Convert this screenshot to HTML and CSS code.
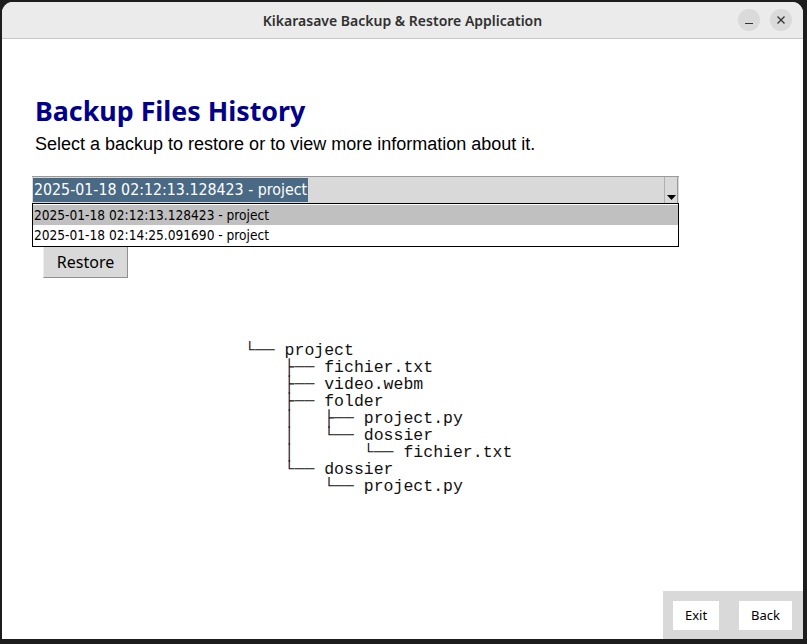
FILE: index.html
```html
<!DOCTYPE html>
<html>
<head>
<meta charset="utf-8">
<link rel="stylesheet" href="styles.css">
</head>
<body>
<div class="window">
  <div class="titlebar">
    <div class="title">Kikarasave Backup &amp; Restore Application</div>
    <div class="wbtns">
      <span class="wbtn"><svg width="22" height="22" viewBox="0 0 22 22"><line x1="7" y1="14.5" x2="15" y2="14.5" stroke="#333" stroke-width="1.2"/></svg></span>
      <span class="wbtn"><svg width="22" height="22" viewBox="0 0 22 22"><path d="M7.5 7.5 L14.5 14.5 M14.5 7.5 L7.5 14.5" stroke="#333" stroke-width="1.3"/></svg></span>
    </div>
  </div>
  <div class="content">
    <h1 class="heading">Backup Files History</h1>
    <p class="subtitle">Select a backup to restore or to view more information about it.</p>
    <div class="combo-wrap">
      <div class="combo">
        <div class="combo-field"><span class="combo-sel">2025-01-18 02:12:13.128423 - project</span></div>
        <div class="combo-arrow"><svg width="9" height="6" viewBox="0 0 9 6"><path d="M0 0 H9 L4.5 5 Z" fill="#000"/></svg></div>
      </div>
      <div class="dropdown">
        <div class="dd-item active">2025-01-18 02:12:13.128423 - project</div>
        <div class="dd-item">2025-01-18 02:14:25.091690 - project</div>
      </div>
    </div>
    <button class="restore">Restore</button>
    <pre class="tree">└── project
    ├── fichier.txt
    ├── video.webm
    ├── folder
    │   ├── project.py
    │   └── dossier
    │       └── fichier.txt
    └── dossier
        └── project.py</pre>
  </div>
  <div class="footer">
    <div class="panel">
      <button class="fbtn">Exit</button>
      <button class="fbtn">Back</button>
    </div>
  </div>
</div>
</body>
</html>
```
FILE: styles.css
```css
html, body {
  margin: 0;
  padding: 0;
  width: 807px;
  height: 644px;
  background: #1d1d1d;
  overflow: hidden;
}
body {
  padding: 2px 4px 5px 2px;
  box-sizing: border-box;
}
.window {
  width: 801px;
  height: 637px;
  background: #ffffff;
  border-radius: 11px 11px 0 0;
  display: flex;
  flex-direction: column;
  overflow: hidden;
}
.titlebar {
  height: 36px;
  background: #ebebeb;
  border-bottom: 1px solid #c6c6c6;
  display: flex;
  align-items: center;
  justify-content: center;
  position: relative;
  flex: none;
}
.title {
  font-family: "Noto Sans", sans-serif;
  font-weight: 600;
  font-size: 14px;
  color: #303030;
}
.wbtns {
  position: absolute;
  right: 11px;
  top: 7px;
  display: flex;
  gap: 10px;
}
.wbtn {
  width: 22px;
  height: 22px;
  border-radius: 50%;
  background: #dadada;
  display: block;
}
.wbtn svg { display: block; }
.content {
  flex: 1;
  padding-left: 30px;
  position: relative;
}
.heading {
  margin: 54px 0 0 3px;
  font-family: "Noto Sans", sans-serif;
  font-weight: 700;
  font-size: 26.8px;
  line-height: 36px;
  color: #00008b;
}
.subtitle {
  margin: 4px 0 0 3px;
  font-family: "Liberation Sans", Arial, sans-serif;
  font-size: 18px;
  line-height: 22px;
  color: #000;
}
.combo-wrap {
  position: relative;
  width: 647px;
  margin-top: 21px;
}
.combo {
  height: 27px;
  background: #d9d9d9;
  border-top: 1px solid #9a9a9a;
  box-sizing: border-box;
  display: flex;
}
.combo-field {
  flex: 1;
  padding: 1px 0 0 1px;
}
.combo-sel {
  display: inline-block;
  background: #4a6984;
  color: #ffffff;
  font-family: "DejaVu Sans Condensed", "DejaVu Sans", sans-serif;
  font-stretch: condensed;
  font-size: 15.8px;
  line-height: 24px;
  padding: 0 1px;
}
.combo-arrow {
  width: 12px;
  border-left: 1px solid #b0b0b0;
  border-right: 1px solid #9a9a9a;
  display: flex;
  align-items: flex-end;
  justify-content: center;
  padding-bottom: 2px;
  margin-right: 1px;
}
.combo-arrow svg { display: block; }
.dropdown {
  position: absolute;
  left: 0;
  top: 27px;
  width: 647px;
  box-sizing: border-box;
  border: 1px solid #000;
  background: #fff;
  padding: 1px 0;
}
.dd-item {
  height: 20px;
  line-height: 20px;
  font-family: "DejaVu Sans Condensed", "DejaVu Sans", sans-serif;
  font-stretch: condensed;
  font-size: 13.6px;
  color: #000;
  padding-left: 1px;
}
.dd-item.active {
  background: #c0c0c0;
}
.restore {
  display: block;
  margin: 42px 0 0 11px;
  width: 85px;
  height: 33px;
  background: #d9d9d9;
  border: 1px solid;
  border-color: #ececec #8f8f8f #8f8f8f #ececec;
  font-family: "Noto Sans", sans-serif;
  font-size: 16px;
  color: #000;
  padding: 0;
}
.tree {
  margin: 64px 0 0 213px;
  font-family: "Liberation Mono", "Courier New", monospace;
  font-size: 16.5px;
  line-height: 17px;
  color: #111;
}
.footer {
  flex: none;
  display: flex;
  justify-content: flex-end;
}
.panel {
  width: 140px;
  height: 48px;
  background: #d9d9d9;
  box-sizing: border-box;
  display: flex;
  align-items: center;
  padding-left: 10px;
  gap: 20px;
}
.fbtn {
  height: 29px;
  background: #fff;
  border: none;
  font-family: "Noto Sans", sans-serif;
  font-size: 13px;
  color: #000;
  padding: 0;
}
.fbtn:first-child { width: 46px; }
.fbtn:last-child { width: 53px; }
```
